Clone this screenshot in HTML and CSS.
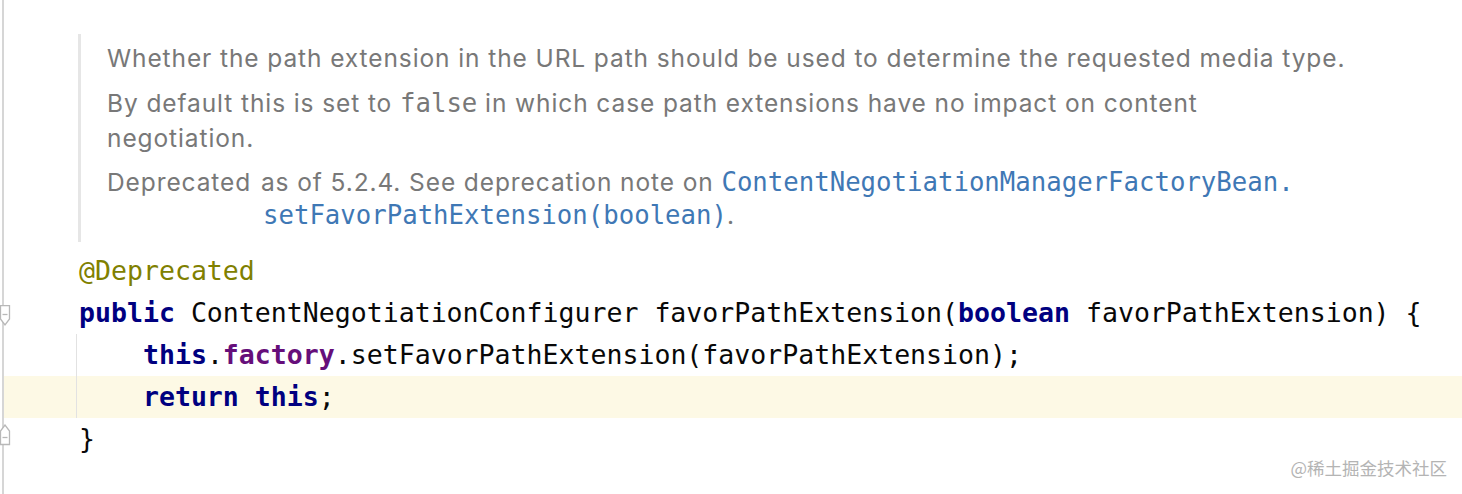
FILE: index.html
```html
<!DOCTYPE html>
<html>
<head>
<meta charset="utf-8">
<link rel="stylesheet" href="styles.css">
</head>
<body>
<div class="editor">
  <div class="gutter-line"></div>
  <svg class="fold fold-start" width="12" height="24" viewBox="0 0 12 24"><path d="M1.5 0.5 H10.5 V14 L6 20 L1.5 14 Z" fill="#fff" stroke="#b8b8b8" stroke-width="1.3"/><path d="M3.5 9.5 H8.5" stroke="#b8b8b8" stroke-width="1.3"/></svg>
  <svg class="fold fold-end" width="12" height="24" viewBox="0 0 12 24"><path d="M1.5 20.5 H10.5 V7 L6 1 L1.5 7 Z" fill="#fff" stroke="#b8b8b8" stroke-width="1.3"/><path d="M3.5 13.5 H8.5" stroke="#b8b8b8" stroke-width="1.3"/></svg>

  <div class="doc">
    <p>Whether the path extension in the URL path should be used to determine the requested media type.</p>
    <p>By default this is set to <code>false</code> in which case path extensions have no impact on content<br>negotiation.</p>
    <div class="deprecated">
      <div class="dep-line"><span class="dep-label">Deprecated</span> as of 5.2.4. See deprecation note on <a class="link">ContentNegotiationManagerFactoryBean.</a></div>
      <div class="dep-cont"><a class="link">setFavorPathExtension(boolean)</a>.</div>
    </div>
  </div>

  <div class="code">
    <div class="line"><span class="ann">@Deprecated</span></div>
    <div class="line"><span class="kw">public</span> ContentNegotiationConfigurer favorPathExtension(<span class="kw">boolean</span> favorPathExtension) {</div>
    <div class="body">
      <div class="line">    <span class="kw">this</span>.<span class="field">factory</span>.setFavorPathExtension(favorPathExtension);</div>
      <div class="line current">    <span class="kw">return this</span>;</div>
    </div>
    <div class="line">}</div>
  </div>

  <div class="watermark">@稀土掘金技术社区</div>
</div>
</body>
</html>
```

FILE: styles.css
```css
html, body {
  margin: 0;
  padding: 0;
  background: #ffffff;
}

.editor {
  position: relative;
  width: 1462px;
  height: 494px;
  overflow: hidden;
  padding-left: 4px;
  padding-top: 34px;
  box-sizing: border-box;
}

.gutter-line {
  position: absolute;
  left: 2px;
  top: 0;
  bottom: 0;
  width: 2px;
  background: #d6d6d6;
}

.fold {
  position: absolute;
  left: -1px;
}
.fold-start { top: 305px; }
.fold-end { top: 424px; }

.doc {
  margin-left: 74px;
  border-left: 3px solid #e6e6e6;
  padding: 7px 0 0 26px;
  height: 208px;
  box-sizing: border-box;
  color: #787878;
  font-family: Inter, "Liberation Sans", sans-serif;
  font-size: 24.5px;
  letter-spacing: 0.9px;
  line-height: 35px;
}

.doc p {
  margin: 0 0 10px 0;
}

.doc code, .doc .link {
  font-family: "DejaVu Sans Mono", "Liberation Mono", monospace;
  font-size: 25.7px;
  letter-spacing: 0;
}

.link {
  color: #3f78b5;
}

.dep-label {
  margin-right: 2px;
}

.dep-line, .dep-cont {
  line-height: 33px;
}

.dep-cont {
  padding-left: 156px;
}

.code {
  margin-top: 8px;
  font-family: "DejaVu Sans Mono", "Liberation Mono", monospace;
  font-size: 26.55px;
  color: #080808;
}

.line {
  height: 42px;
  line-height: 42px;
  padding-left: 75px;
  white-space: pre;
}

.body {
  position: relative;
}
.body::before {
  content: "";
  position: absolute;
  left: 72px;
  top: 0;
  bottom: 0;
  width: 1px;
  background: #e2e2e2;
}

.current {
  background: #fdf9e5;
}

.kw {
  color: #000080;
  font-weight: bold;
}

.ann {
  color: #808000;
}

.field {
  color: #660e7a;
  font-weight: bold;
}

.watermark {
  position: absolute;
  right: 15px;
  bottom: 14px;
  font-family: "Noto Sans CJK SC", sans-serif;
  font-size: 17.5px;
  color: #b4b4b4;
}
```
